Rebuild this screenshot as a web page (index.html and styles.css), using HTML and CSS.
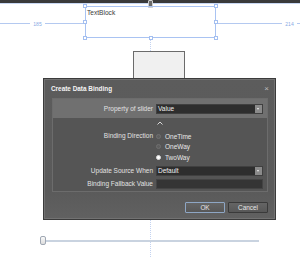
FILE: index.html
```html
<!DOCTYPE html>
<html>
<head>
<meta charset="utf-8">
<link rel="stylesheet" href="styles.css">
</head>
<body>
<div class="canvas">
  <div class="topbar"></div>
  <div class="topline"></div>
  <div class="pin"></div>
  <div class="vguide"></div>
  <div class="margin margin-left"><span>185</span></div>
  <div class="margin margin-right"><span>214</span></div>
  <div class="sel">
    <span class="tb-text">TextBlock</span>
    <i class="h h-tl"></i><i class="h h-ml"></i><i class="h h-bl"></i>
    <i class="h h-tr"></i><i class="h h-mr"></i><i class="h h-br"></i>
    <i class="h h-bm"></i>
  </div>
  <div class="sample"></div>
  <div class="slider"><div class="track"></div><div class="thumb"></div></div>

  <div class="dialog">
    <div class="title">
      <span>Create Data Binding</span>
      <span class="close">×</span>
    </div>
    <div class="panel">
      <div class="row head">
        <label>Property of slider</label>
        <div class="combo"><span>Value</span><b class="drop"></b></div>
      </div>
      <div class="row chev-row">
        <span></span>
        <svg class="chev" width="6" height="4" viewBox="0 0 6 4"><path d="M0.5 3.5 L3 1 L5.5 3.5" fill="none" stroke="#d8d8d8" stroke-width="1"/></svg>
      </div>
      <div class="row dir">
        <label>Binding Direction</label>
        <div class="radios">
          <div class="radio"><i></i>OneTime</div>
          <div class="radio"><i></i>OneWay</div>
          <div class="radio on"><i></i>TwoWay</div>
        </div>
      </div>
      <div class="row">
        <label>Update Source When</label>
        <div class="combo"><span>Default</span><b class="drop"></b></div>
      </div>
      <div class="row">
        <label>Binding Fallback Value</label>
        <div class="input"></div>
      </div>
    </div>
    <div class="buttons">
      <button class="btn ok">OK</button>
      <button class="btn">Cancel</button>
    </div>
  </div>
</div>
</body>
</html>
```
FILE: styles.css
```css
html, body {
  margin: 0;
  padding: 0;
  background: #ffffff;
}
.canvas {
  position: relative;
  width: 300px;
  height: 257px;
  overflow: hidden;
  font-family: "Liberation Sans", Arial, sans-serif;
  font-size: 6.5px;
}
.topbar {
  position: absolute;
  left: 0; top: 0;
  width: 300px; height: 3px;
  background: #3a3a3a;
}
.topline {
  position: absolute;
  left: 0; top: 3px;
  width: 300px; height: 1px;
  background: #c9d8f3;
}
.pin {
  position: absolute;
  left: 148px; top: 0;
  width: 3px; height: 6px;
  background: #6a6a6a;
  border: 1px solid #d0d0d0;
  border-radius: 1px;
}
.vguide {
  position: absolute;
  left: 150px; top: 39px;
  width: 0; height: 218px;
  border-left: 1px dotted #c3d3f1;
}
.margin {
  position: absolute;
  top: 23px;
  height: 1px;
  background: #b4c9f0;
  display: flex;
  justify-content: center;
  align-items: center;
}
.margin span {
  background: #fff;
  color: #8aa9e4;
  font-size: 5px;
  padding: 0 3px;
  line-height: 6px;
}
.margin-left { left: 0; width: 84px; }
.margin-left span { margin-left: -9px; }
.margin-right { left: 217px; width: 83px; }
.margin-right span { margin-left: 62px; }
.sel {
  position: absolute;
  left: 85px; top: 6px;
  width: 131px; height: 32px;
  box-sizing: border-box;
  border: 1px solid #a9c3f2;
}
.tb-text {
  display: block;
  padding: 2px 0 0 1px;
  color: #3a3a3a;
  font-size: 6.6px;
}
.h {
  position: absolute;
  width: 2px; height: 2px;
  background: #fff;
  border: 1px solid #a4bff0;
  box-sizing: content-box;
}
.h-tl { left: -3px; top: -3px; }
.h-ml { left: -3px; top: 13px; }
.h-bl { left: -3px; bottom: -3px; }
.h-tr { right: -3px; top: -3px; }
.h-mr { right: -3px; top: 13px; }
.h-br { right: -3px; bottom: -3px; }
.h-bm { left: 63px; bottom: -3px; }
.sample {
  position: absolute;
  left: 133px; top: 51px;
  width: 52px; height: 35px;
  box-sizing: border-box;
  border: 1px solid #6b6b6b;
  background: #f0f0f0;
}
.slider {
  position: absolute;
  left: 40px; top: 236px;
  width: 220px; height: 10px;
}
.track {
  position: absolute;
  left: 3px; top: 4px;
  width: 216px; height: 2px;
  background: #c9d3e0;
}
.thumb {
  position: absolute;
  left: 0; top: 0;
  width: 6px; height: 9px;
  box-sizing: border-box;
  border: 1px solid #a0a8b4;
  border-radius: 2px;
  background: linear-gradient(#fafafa, #dcdcdc);
}
.dialog {
  position: absolute;
  left: 43px; top: 78px;
  width: 233px; height: 142px;
  box-sizing: border-box;
  background: linear-gradient(#5c5c5c 0, #5a5a5a 80%, #616161 100%);
  border: 1px solid #3b3b3b;
  box-shadow: inset 0 0 0 1px #727272;
  display: flex;
  flex-direction: column;
  color: #e4e4e4;
}
.title {
  height: 18px;
  display: flex;
  align-items: center;
  justify-content: space-between;
  padding: 0 6px 0 7px;
  font-weight: bold;
  color: #f4f4f4;
  font-size: 6.4px;
}
.close {
  font-weight: normal;
  font-size: 8px;
  color: #bdbdbd;
}
.panel {
  margin: 1px 7px 0 8px;
  height: 94px;
  box-sizing: border-box;
  border: 1px solid #6c6c6c;
  background: #555555;
  display: flex;
  flex-direction: column;
}
.row {
  display: grid;
  grid-template-columns: 100px 107px;
  column-gap: 3px;
  align-items: center;
}
.row label {
  text-align: right;
  color: #e2e2e2;
}
.head {
  height: 19px;
  background: #707070;
}
.chev-row {
  height: 10px;
}
.chev { margin-left: 1px; }
.dir {
  align-items: start;
  margin-top: 3px;
}
.dir label { line-height: 10px; }
.radios {
  display: flex;
  flex-direction: column;
}
.radio {
  height: 10.5px;
  display: flex;
  align-items: center;
  gap: 4px;
  color: #e8e8e8;
}
.radio i {
  width: 3px; height: 3px;
  border-radius: 50%;
  border: 1px solid #707070;
  background: #5e5e5e;
}
.radio.on i {
  background: #fff;
  border-color: #ddd;
}
.combo {
  height: 10px;
  box-sizing: border-box;
  background: #2e2e2e;
  border: 1px solid #404040;
  display: flex;
  align-items: center;
  justify-content: space-between;
  padding-left: 1px;
  color: #f0f0f0;
}
.drop {
  width: 7px; height: 8px;
  background: #8a8a8a;
  position: relative;
}
.drop::after {
  content: "";
  position: absolute;
  left: 2px; top: 3px;
  border-left: 1.5px solid transparent;
  border-right: 1.5px solid transparent;
  border-top: 2px solid #eee;
}
.row + .row:not(.chev-row):not(.dir) { margin-top: 3px; }
.input {
  height: 10px;
  box-sizing: border-box;
  background: #353535;
  border: 1px solid #444;
}
.buttons {
  display: flex;
  justify-content: flex-end;
  gap: 3px;
  padding: 10px 7px 0 0;
}
.btn {
  width: 40px;
  height: 11px;
  padding: 0;
  font-family: "Liberation Sans", Arial, sans-serif;
  font-size: 6.4px;
  color: #e6e6e6;
  background: linear-gradient(#656565, #575757);
  border: 1px solid #3a3a3a;
  border-radius: 1px;
}
.btn.ok {
  border-color: #8ea6c4;
}
```
